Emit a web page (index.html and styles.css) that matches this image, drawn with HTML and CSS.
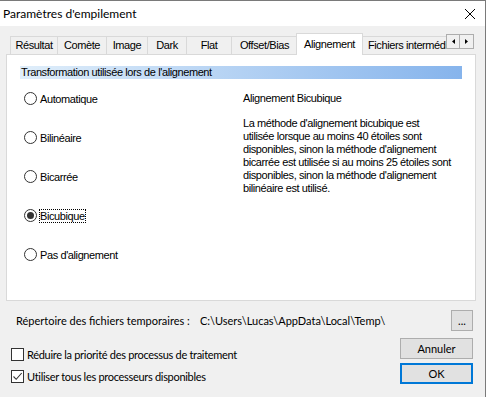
FILE: index.html
```html
<!DOCTYPE html>
<html lang="fr">
<head>
  <meta charset="UTF-8">
  <title>Paramètres d'empilement</title>
  <link rel="stylesheet" href="styles.css">
</head>
<body>
  <div class="window">
    <div class="titlebar">
      <span class="title">Paramètres d'empilement</span>
      <svg class="close" width="10" height="10" viewBox="0 0 10 10">
        <path d="M0 0 L10 10 M10 0 L0 10" stroke="#000" stroke-width="1" fill="none"/>
      </svg>
    </div>
    <div class="client">
      <div class="tabs">
        <div class="tab t-result">Résultat</div>
        <div class="tab t-comet">Comète</div>
        <div class="tab t-image">Image</div>
        <div class="tab t-dark">Dark</div>
        <div class="tab t-flat">Flat</div>
        <div class="tab t-offset">Offset/Bias</div>
        <div class="tab t-align selected">Alignement</div>
        <div class="tab t-files">Fichiers intermédiaires</div>
        <div class="scroller">
          <span class="arrow"><svg width="3" height="5" viewBox="0 0 3 5"><path d="M3 0 L0 2.5 L3 5 Z" fill="#000"/></svg></span>
          <span class="arrow"><svg width="3" height="5" viewBox="0 0 3 5"><path d="M0 0 L3 2.5 L0 5 Z" fill="#000"/></svg></span>
        </div>
      </div>
      <div class="panel">
        <div class="group-header">Transformation utilisée lors de l'alignement</div>
        <div class="panel-body">
          <div class="options">
            <div class="option"><span class="radio"></span><span>Automatique</span></div>
            <div class="option"><span class="radio"></span><span>Bilinéaire</span></div>
            <div class="option"><span class="radio"></span><span>Bicarrée</span></div>
            <div class="option"><span class="radio checked"></span><span class="focus">Bicubique</span></div>
            <div class="option"><span class="radio"></span><span>Pas d'alignement</span></div>
          </div>
          <div class="description">
            <div class="desc-title">Alignement Bicubique</div>
            <p>La méthode d'alignement bicubique est<br>utilisée lorsque au moins 40 étoiles sont<br>disponibles, sinon la méthode d'alignement<br>bicarrée est utilisée si au moins 25 étoiles sont<br>disponibles, sinon la méthode d'alignement<br>bilinéaire est utilisé.</p>
          </div>
        </div>
      </div>
      <div class="folder-row">
        <span class="folder-label">Répertoire des fichiers temporaires :</span>
        <span class="folder-path">C:\Users\Lucas\AppData\Local\Temp\</span>
        <button class="btn small">...</button>
      </div>
      <div class="footer">
        <div class="checks">
          <label class="check"><span class="box"></span>Réduire la priorité des processus de traitement</label>
          <label class="check"><span class="box checked"><svg width="11" height="11" viewBox="0 0 11 11"><path d="M1.5 5.5 L4.2 8.3 L9.7 2" stroke="#333" stroke-width="1.1" fill="none"/></svg></span>Utiliser tous les processeurs disponibles</label>
        </div>
        <div class="buttons">
          <button class="btn">Annuler</button>
          <button class="btn default">OK</button>
        </div>
      </div>
    </div>
  </div>
</body>
</html>
```

FILE: styles.css
```css
* {
    box-sizing: border-box;
}
body {
    margin: 0;
    font-family: "Liberation Sans", Arial, sans-serif;
    font-size: 11px;
    letter-spacing: -0.4px;
    color: #000;
}
.window {
    width: 486px;
    height: 397px;
    border-top: 1px solid #7a7a7a;
    border-right: 1px solid #7a7a7a;
    background: #f0f0f0;
    display: flex;
    flex-direction: column;
}
.titlebar {
    flex: none;
    height: 25px;
    background: #fff;
    display: flex;
    align-items: center;
    justify-content: space-between;
    padding: 0 10px 0 3px;
}
.title {
    font-family: Lato, "Open Sans", sans-serif;
    font-size: 12px;
    letter-spacing: 0;
}
.client {
    flex: 1;
    padding: 7px 9px 0 6px;
    display: flex;
    flex-direction: column;
}

/* tab strip */
.tabs {
    height: 21px;
    padding-left: 4px;
    display: flex;
    align-items: flex-end;
    position: relative;
    z-index: 1;
}
.tab {
    height: 18px;
    line-height: 17px;
    text-align: center;
    border: 1px solid #d9d9d9;
    border-bottom: none;
    border-left: none;
    background: #f0f0f0;
    white-space: nowrap;
}
.t-result { width: 48px; border-left: 1px solid #d9d9d9; }
.t-comet { width: 49px; }
.t-image { width: 41px; }
.t-dark { width: 39px; }
.t-flat { width: 45px; }
.t-offset { width: 66px; }
.t-align { width: 67px; }
.t-files { width: 84px; }
.tab.selected {
    height: 22px;
    margin: 0 -1px -1px -2px;
    line-height: 20px;
    background: #fff;
    border-left: 1px solid #d9d9d9;
    position: relative;
}
.tab.t-files {
    overflow: hidden;
    text-align: left;
    padding-left: 6px;
    border-right: none;
}
.scroller {
    display: flex;
    align-self: flex-start;
    margin-top: 1px;
}
.arrow {
    width: 14px;
    height: 15px;
    border: 1px solid #adadad;
    background: #f0f0f0;
    display: flex;
    align-items: center;
    justify-content: center;
}
.arrow + .arrow {
    border-left: none;
}

/* page */
.panel {
    flex: none;
    height: 247px;
    background: #fff;
    border: 1px solid #d9d9d9;
    padding: 11px 13px 0 13px;
}
.group-header {
    height: 13px;
    line-height: 13px;
    padding-left: 1px;
    background: linear-gradient(to right, #e0eefa, #86b4ec);
}
.panel-body {
    display: flex;
    padding-top: 13px;
}
.options {
    width: 223px;
    padding-left: 4px;
    display: flex;
    flex-direction: column;
    gap: 26px;
}
.option {
    height: 13px;
    display: flex;
    align-items: center;
    gap: 3px;
}
.radio {
    width: 13px;
    height: 13px;
    border: 1px solid #333;
    border-radius: 50%;
    background: #fff;
    display: flex;
    align-items: center;
    justify-content: center;
}
.radio.checked::after {
    content: "";
    width: 7px;
    height: 7px;
    border-radius: 50%;
    background: #333;
}
.focus {
    outline: 1px dotted #000;
}
.desc-title {
    height: 13px;
    line-height: 13px;
}
.description p {
    margin: 12px 0 0;
    line-height: 13px;
}

/* bottom part */
.folder-row {
    flex: none;
    height: 21px;
    margin: 9px 3px 0 0;
    display: flex;
    align-items: center;
    padding-left: 10px;
    font-family: Lato, "Open Sans", sans-serif;
    font-size: 11px;
    letter-spacing: 0;
    white-space: nowrap;
}
.folder-label {
    width: 184px;
}
.folder-path {
    flex: 1;
}
.btn {
    font-family: Lato, "Open Sans", sans-serif;
    font-size: 11px;
    letter-spacing: 0;
    height: 21px;
    width: 73px;
    padding: 0;
    background: #e1e1e1;
    border: 1px solid #adadad;
    color: #000;
}
.btn.small {
    width: 22px;
    line-height: 12px;
}
.btn.default {
    border: 2px solid #0078d7;
}
.footer {
    flex: none;
    height: 47px;
    margin: 6px 3px 0 0;
    display: flex;
    justify-content: space-between;
    align-items: flex-end;
    font-family: Lato, "Open Sans", sans-serif;
    font-size: 11px;
}
.checks {
    display: flex;
    flex-direction: column;
    gap: 7px;
    padding-left: 5px;
}
.check {
    display: flex;
    align-items: center;
    gap: 3px;
    height: 15px;
    letter-spacing: -0.3px;
}
.box {
    width: 13px;
    height: 13px;
    border: 1px solid #333;
    background: #fff;
    display: flex;
    align-items: center;
    justify-content: center;
}
.buttons {
    display: flex;
    flex-direction: column;
    gap: 4px;
}
```
